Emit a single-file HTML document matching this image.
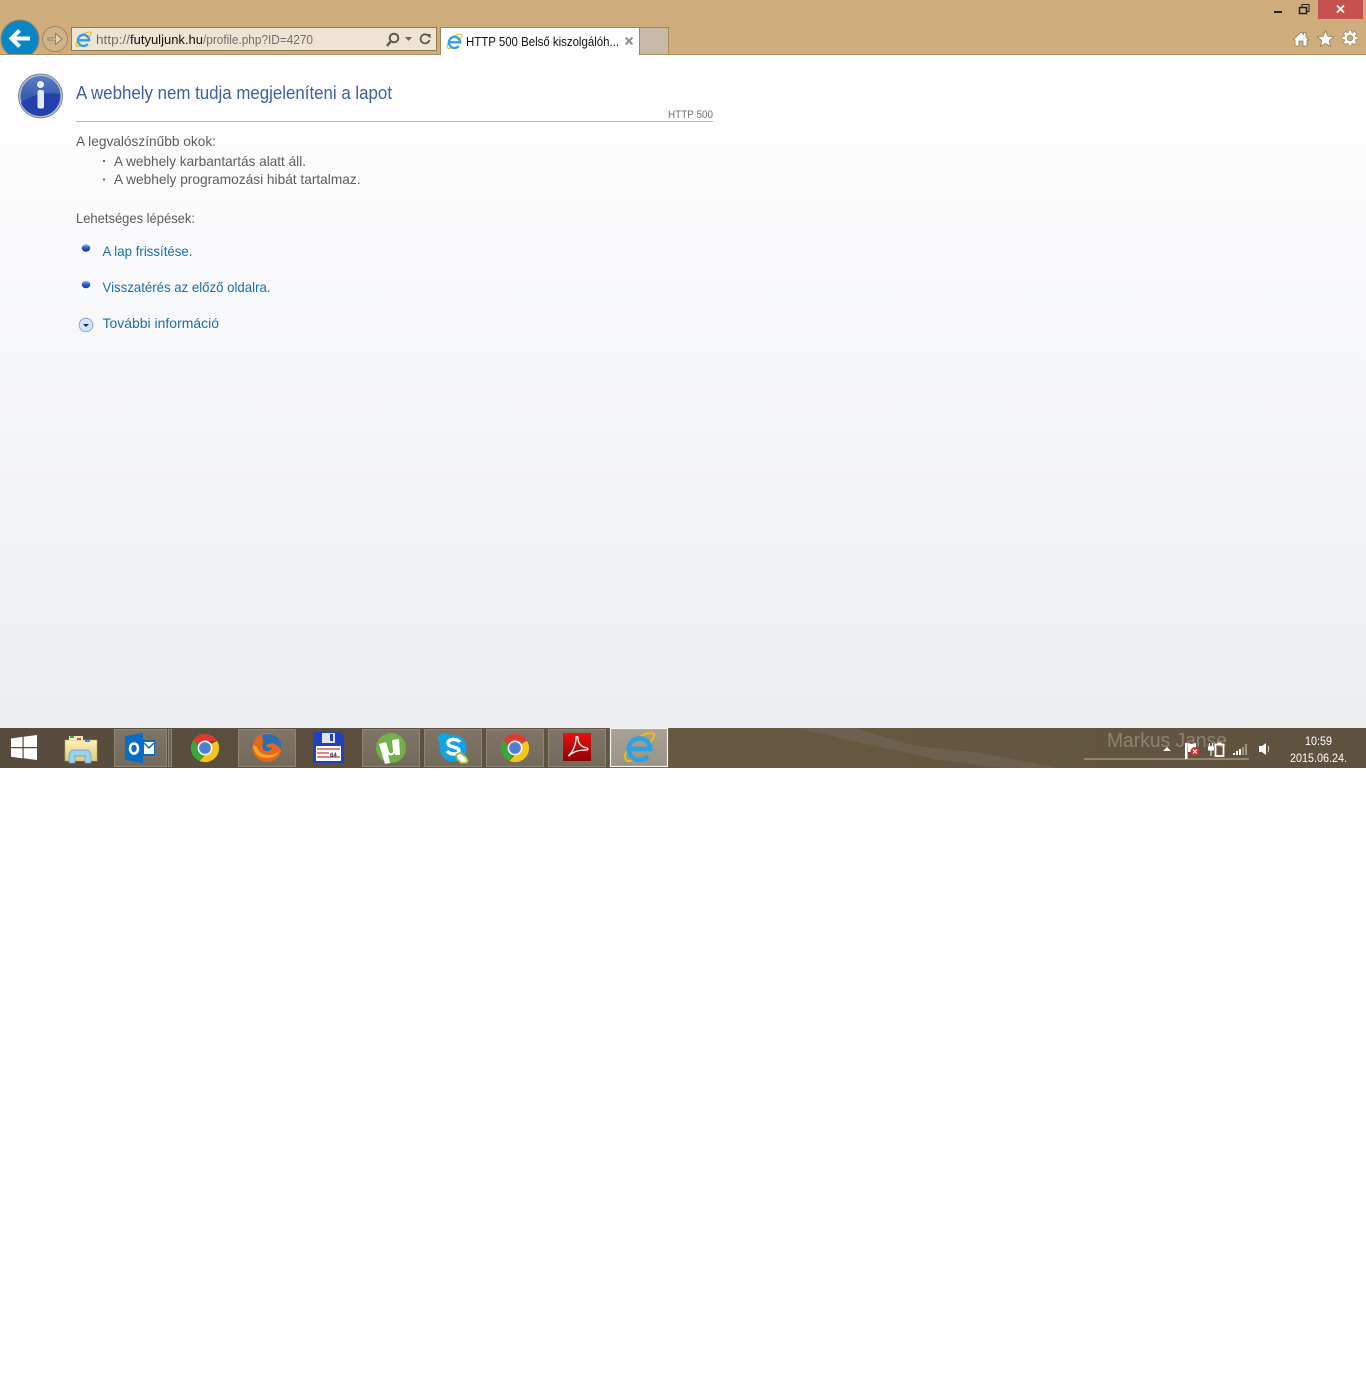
<!DOCTYPE html>
<html lang="hu"><head><meta charset="utf-8"><title>HTTP 500 Belső kiszolgálóhiba</title>
<style>html,body{margin:0;padding:0;background:#fff}svg{display:block}text{font-family:"Liberation Sans",sans-serif}</style></head>
<body>
<svg xmlns="http://www.w3.org/2000/svg" width="1366" height="1375" viewBox="0 0 1366 1375">
<defs>
<clipPath id="backclip"><rect x="0" y="15" width="50" height="39"/></clipPath>
<linearGradient id="pg" x1="0" y1="0" x2="0" y2="1"><stop offset="0" stop-color="#fff"/><stop offset=".12" stop-color="#fdfdfe"/><stop offset="1" stop-color="#eceef2"/></linearGradient>
<linearGradient id="tb" x1="0" y1="0" x2="1" y2="0"><stop offset="0" stop-color="#574c3c"/><stop offset=".3" stop-color="#5c4f3d"/><stop offset=".5" stop-color="#665841"/><stop offset=".75" stop-color="#645640"/><stop offset="1" stop-color="#5e523f"/></linearGradient>
<linearGradient id="btn" x1="0" y1="0" x2="0" y2="1"><stop offset="0" stop-color="#7f7566"/><stop offset="1" stop-color="#736a5c"/></linearGradient>
<linearGradient id="btn2" x1="0" y1="0" x2="0" y2="1"><stop offset="0" stop-color="#a8a397"/><stop offset="1" stop-color="#9a9484"/></linearGradient>
<linearGradient id="gi" x1="0" y1="0" x2="0" y2="1"><stop offset="0" stop-color="#5a7ec6"/><stop offset=".5" stop-color="#3a5fb0"/><stop offset="1" stop-color="#2f4fb8"/></linearGradient>
<linearGradient id="dot" x1="0" y1="0" x2="0" y2="1"><stop offset="0" stop-color="#a9c6ef"/><stop offset=".45" stop-color="#2c5fd0"/><stop offset="1" stop-color="#123a9a"/></linearGradient>
<linearGradient id="folder" x1="0" y1="0" x2="0" y2="1"><stop offset="0" stop-color="#fdf0b8"/><stop offset="1" stop-color="#e5ca7e"/></linearGradient>
<linearGradient id="acro" x1="0" y1="0" x2="0" y2="1"><stop offset="0" stop-color="#e90f0f"/><stop offset="1" stop-color="#8c0505"/></linearGradient>
<symbol id="ie" viewBox="0 0 32 32">
<path d="M3 28C-1 23 9 9 17 5c6-3 12-4 13-2 1 2-1 5-4 8" fill="none" stroke="#f0b71c" stroke-width="2"/>
<path d="M3 28c2 2 6 1 9-1" fill="none" stroke="#f0b71c" stroke-width="2"/>
<path d="M6.500 17.500H26.500A10.500 10.500 0 1 0 24 24.500" fill="none" stroke="#2f9fe6" stroke-width="4.400"/>
</symbol>
<symbol id="chrome" viewBox="0 0 30 30">
<path d="M15 1a14 14 0 0 1 12.100 7H15a7 7 0 0 0-6.700 5L3.400 7A14 14 0 0 1 15 1z" fill="#dd3b32"/>
<path d="M3.400 7L8.300 13a7 7 0 0 0 6 9L9.500 28A14 14 0 0 1 3.400 7z" fill="#3da53c"/>
<path d="M27.100 8A14 14 0 0 1 9.500 28L15 22a7 7 0 0 0 6-11z" fill="#f5c519"/>
<circle cx="15" cy="15" r="7.500" fill="#f2f2f2"/><circle cx="15" cy="15" r="5.800" fill="#4b7fd1"/>
</symbol>
</defs>

<!-- browser chrome -->
<rect width="1366" height="55" fill="#ceac7c"/>
<rect y="54" width="1366" height="1" fill="#a99268"/>
<!-- back / forward -->
<g clip-path="url(#backclip)"><circle cx="20" cy="39" r="19" fill="#0986c5" stroke="#9c8257" stroke-width="1"/></g>
<path d="M11 38.500h19M19.500 30.500l-8 8 8 8" fill="none" stroke="#fff" stroke-width="4"/>
<circle cx="55" cy="39" r="12.500" fill="#d1b388" stroke="#a08a60"/>
<path d="M48 38h7.500v-4.500l6.500 5.500-6.500 5.500V40H48z" fill="#e4d5ba" stroke="#8f7a55" stroke-width=".9"/>
<!-- address -->
<rect x="71.500" y="27.500" width="365" height="23" fill="#efe3d3" stroke="#927b52"/>
<use href="#ie" x="75" y="31" width="17" height="17"/>
<text x="96" y="44" font-size="13" fill="#6e6e6e" textLength="34" lengthAdjust="spacingAndGlyphs">http://</text>
<text x="130" y="44" font-size="13" fill="#111" textLength="73" lengthAdjust="spacingAndGlyphs">futyuljunk.hu</text>
<text x="203" y="44" font-size="13" fill="#6e6e6e" textLength="110" lengthAdjust="spacingAndGlyphs">/profile.php?ID=4270</text>
<circle cx="394" cy="38" r="4.300" fill="none" stroke="#5e5a50" stroke-width="2"/><path d="M391 41l-4 5" stroke="#5e5a50" stroke-width="2.400"/>
<path d="M405 37h7l-3.500 4z" fill="#6b675d"/>
<path d="M429 36.500a4.500 4.500 0 1 0 .5 3.500" fill="none" stroke="#5e5a50" stroke-width="1.800"/><path d="M426 34h4.500v4.500z" fill="#5e5a50"/>
<!-- tabs -->
<rect x="440.500" y="27.500" width="199" height="28" fill="#fff" stroke="#9d875e"/>
<rect x="441" y="54" width="198" height="1" fill="#fff"/>
<rect x="640" y="28" width="28.500" height="26" fill="#c7b9a6"/><path d="M640 27.500h28.500V54" fill="none" stroke="#9d875e"/>
<use href="#ie" x="446" y="33" width="17" height="17"/>
<text x="466" y="46" font-size="13" fill="#111" textLength="153" lengthAdjust="spacingAndGlyphs">HTTP 500 Belső kiszolgálóh...</text>
<path d="M625.500 37.500l7 7M632.500 37.500l-7 7" stroke="#8e8e8e" stroke-width="2"/>
<!-- window controls -->
<rect x="1318" y="0" width="45" height="19" fill="#c75050"/>
<path d="M1337 5.500l7 7M1344 5.500l-7 7" stroke="#fff" stroke-width="1.800"/>
<rect x="1274" y="11" width="8" height="2" fill="#222"/>
<path d="M1302 7.500V4.500h7v7h-2.500" fill="none" stroke="#222"/><rect x="1299.500" y="7.500" width="7" height="6" fill="none" stroke="#222" stroke-width="1.500"/>
<!-- toolbar icons -->
<path d="M1293.500 39.500l7.500-7.500 2.500 2.500v-2h2.500v4.500l3 3h-2v6h-4v-5h-4v5h-4v-6z" fill="#fff" stroke="#8d7a58" stroke-width=".8"/>
<path d="M1325.500 31l2.400 5.300 5.600.6-4.200 3.800 1.200 5.600-5-2.900-5 2.900 1.200-5.600-4.200-3.800 5.600-.6z" fill="#fff" stroke="#8d7a58" stroke-width=".8"/>
<path d="M1350 30v16M1342 38h16M1344.300 32.300l11.400 11.400M1355.700 32.300l-11.400 11.400" stroke="#8d7a58" stroke-width="4"/>
<path d="M1350 30.500v15M1342.500 38h15M1344.700 32.700l10.600 10.600M1355.300 32.700l-10.600 10.600" stroke="#fff" stroke-width="2.800"/>
<circle cx="1350" cy="38" r="5.500" fill="#fff"/>
<circle cx="1350" cy="38" r="2.800" fill="#ceac7c" stroke="#8d7a58" stroke-width=".7"/>

<!-- page -->
<rect y="55" width="1366" height="673" fill="url(#pg)"/>
<circle cx="40.500" cy="96" r="21" fill="url(#gi)" stroke="#b4bac8" stroke-width="2"/>
<circle cx="40.500" cy="96" r="22" fill="none" stroke="#69758f" stroke-width=".7"/>
<path d="M21 103c6-6 22-12 39-9 0 12-8 22-19.500 22C31 116 24 110 21 103z" fill="#2340ac"/>
<circle cx="40.500" cy="84.500" r="3.500" fill="#eef1f7"/><rect x="37.500" y="90" width="6.500" height="18.500" rx="2" fill="#e6eaf2"/>
<text x="76" y="99" font-size="18" fill="#3f5fa3" textLength="316" lengthAdjust="spacingAndGlyphs">A webhely nem tudja megjeleníteni a lapot</text>
<text x="668" y="118" font-size="11" fill="#737373" textLength="45" lengthAdjust="spacingAndGlyphs">HTTP 500</text>
<rect x="76" y="121" width="637" height="1" fill="#b5b9c2"/>
<text x="76" y="146" font-size="14" fill="#5c5c5c" textLength="140" lengthAdjust="spacingAndGlyphs">A legvalószínűbb okok:</text>
<rect x="103" y="160" width="2" height="2" fill="#6a6a6a"/><rect x="103" y="178.500" width="2" height="2" fill="#6a6a6a"/>
<text x="114" y="166" font-size="14" fill="#5c5c5c" textLength="192" lengthAdjust="spacingAndGlyphs">A webhely karbantartás alatt áll.</text>
<text x="114" y="184" font-size="14" fill="#5c5c5c" textLength="246.500" lengthAdjust="spacingAndGlyphs">A webhely programozási hibát tartalmaz.</text>
<text x="76" y="223" font-size="14" fill="#5c5c5c" textLength="119" lengthAdjust="spacingAndGlyphs">Lehetséges lépések:</text>
<ellipse cx="86" cy="248" rx="4.300" ry="3.800" fill="url(#dot)"/>
<text x="102.500" y="256" font-size="14" fill="#1c6ea8" textLength="90" lengthAdjust="spacingAndGlyphs">A lap frissítése.</text>
<ellipse cx="86" cy="284.500" rx="4.300" ry="3.800" fill="url(#dot)"/>
<text x="102.500" y="292" font-size="14" fill="#1c6ea8" textLength="168" lengthAdjust="spacingAndGlyphs">Visszatérés az előző oldalra.</text>
<circle cx="86" cy="325" r="6.800" fill="#d4e3f8" stroke="#8aa6d0"/><path d="M83 324h6l-3 3z" fill="#14265e"/>
<text x="102.500" y="328" font-size="14" fill="#1c6ea8" textLength="116.500" lengthAdjust="spacingAndGlyphs">További információ</text>

<!-- taskbar -->
<rect y="728" width="1366" height="40" fill="url(#tb)"/>
<path d="M795 728h60l60 18 60 6 85 16h-60l-60-8-65-14z" fill="#716351" opacity=".8"/>
<!-- start -->
<path d="M11 738.500l11.500-1.600V747H11zM23.700 736.700L37 735v12H23.700zM11 748.200h11.500v10.200L11 756.800zM23.700 748.200H37V760l-13.300-1.800z" fill="#fff"/>
<!-- explorer -->
<path d="M65 740h32v21H65z" fill="url(#folder)" stroke="#bda468" stroke-width=".6"/>
<rect x="69" y="736" width="14" height="4" fill="#f4e9c0"/><rect x="70" y="736" width="4" height="2" fill="#36a83a"/><rect x="77" y="738" width="4" height="2" fill="#d44"/><rect x="85" y="740" width="5" height="2" fill="#3b8ce0"/>
<path d="M69 763v-9l3-4h16l3 4v9h-6v-7H75v7z" fill="#9bcfee" stroke="#5d9fc8" stroke-width=".7"/>
<!-- outlook -->
<rect x="114.500" y="729.500" width="52" height="37" fill="url(#btn)" stroke="#8e8575"/>
<rect x="168.500" y="729.500" width="3" height="37" fill="#6d6455" stroke="#8e8575"/>
<path d="M143 740h12v16h-12z" fill="#0a6cc4"/>
<path d="M144 742h10v12h-10z" fill="#fff"/><path d="M144 743l5 5 5-5" fill="none" stroke="#0a6cc4" stroke-width="1.500"/>
<path d="M125 736l18-3v30l-18-3z" fill="#0a6cc4"/>
<ellipse cx="134" cy="748.500" rx="4" ry="5" fill="none" stroke="#fff" stroke-width="2.600"/>
<!-- chrome 1 -->
<use href="#chrome" x="190" y="733" width="30" height="30"/>
<!-- firefox -->
<rect x="238.500" y="729.500" width="57" height="37" fill="url(#btn)" stroke="#8e8575"/>
<circle cx="267" cy="747.500" r="14.500" fill="#e5661f"/>
<path d="M262 735c5-2 12-1 16 3 3 3 4 8 3 12-2-4-5-6-9-7-2 1-5 1-6 3 2 2 5 2 6 1 0 3-4 5-7 4-3-2-3-5-2-8 0-3-1-5-1-8z" fill="#2a6fb0"/>
<path d="M253 745c0 8 6 13 14 13 6 0 11-3 13-8-2 3-6 5-11 5-6 0-11-3-12-8z" fill="#f5a623"/>
<!-- floppy -->
<path d="M313 732h27l4 4v27h-31z" fill="#1f43c0"/>
<rect x="322" y="733" width="13" height="10" fill="#e4e4e4"/><rect x="330" y="734" width="3" height="7" fill="#1f43c0"/>
<rect x="316" y="746" width="25" height="15" fill="#fff"/>
<path d="M317 749h23M317 753h12M317 757h23" stroke="#c93a3a" stroke-width="1.200"/>
<text x="330" y="757" font-size="6" fill="#333" font-weight="bold">64</text>
<!-- utorrent -->
<rect x="362.500" y="729.500" width="57" height="37" fill="url(#btn)" stroke="#8e8575"/>
<circle cx="391" cy="748" r="15" fill="#72b04a"/>
<path d="M379 744l7-2 3 10c1 2 4 2 4-1l-1-11 7-1 1 16h-5v-2c-2 3-6 3-7 1l2 9-5 1z" fill="#fff"/>
<!-- skype -->
<rect x="424.500" y="729.500" width="57" height="37" fill="url(#btn)" stroke="#8e8575"/>
<circle cx="453" cy="748" r="13.500" fill="#11a5e5"/><circle cx="444" cy="739" r="6" fill="#11a5e5"/>
<path d="M460 742c-2-3-12-4-12 1 0 5 11 3 11 8 0 4-9 4-12 0" fill="none" stroke="#fff" stroke-width="3.400"/>
<path d="M456 756c0-2 3-3 5-3l5 4 2 4-2 2h-5l-4-4z" fill="#fff" stroke="#8dbb2e" stroke-width="1.800"/>
<!-- chrome 2 -->
<rect x="486.500" y="729.500" width="57" height="37" fill="url(#btn)" stroke="#8e8575"/>
<use href="#chrome" x="500" y="733" width="30" height="30"/>
<!-- acrobat -->
<rect x="548.500" y="729.500" width="57" height="37" fill="url(#btn)" stroke="#8e8575"/>
<rect x="563" y="733" width="28" height="28" fill="url(#acro)"/>
<path d="M569 755c4-3 7-11 7-17 0-2 2-2 2 0 0 6 4 9 9 10 2 1 1 2-1 2-6 0-12 1-16 5-1 1-2 1-1 0z" fill="none" stroke="#fff" stroke-width="1.300"/>
<!-- IE -->
<rect x="610.500" y="728.500" width="57" height="38" fill="url(#btn2)" stroke="#f4f3ef" stroke-width="1.200"/>
<use href="#ie" x="623" y="731" width="33" height="33"/>
<!-- tray -->
<text x="1107" y="747" font-size="20" fill="#8d8371" textLength="120" lengthAdjust="spacingAndGlyphs">Markus Janse</text>
<rect x="1084" y="758" width="165" height="2" fill="#8f8672"/>
<path d="M1163 751l4-4 4 4z" fill="#fff"/>
<path d="M1185 743h2.500v16H1185zM1188 743l4 1 4-1v9h-8z" fill="#fff"/>
<circle cx="1195" cy="751.500" r="4.500" fill="#d92b2b"/><path d="M1193 749.500l4 4M1197 749.500l-4 4" stroke="#fff" stroke-width="1.200"/>
<rect x="1215.500" y="744.500" width="8" height="11.500" fill="none" stroke="#fff" stroke-width="1.800"/><rect x="1217.500" y="742.500" width="4" height="1.500" fill="#fff"/>
<path d="M1209.500 743v4M1212.500 743v4M1208.500 747h5v3h-5zM1211 750v6" stroke="#fff" fill="#fff"/>
<path d="M1233 753h2v2h-2zM1236 751h2v4h-2zM1239 749h2v6h-2z" fill="#fff"/><path d="M1242 747h2v8h-2zM1245 744h2v11h-2z" fill="#9d9585"/>
<path d="M1259 746h3l4-3v12l-4-3h-3z" fill="#fff"/><path d="M1268 746c1 2 1 4 0 6" fill="none" stroke="#d8d3c8"/>
<text x="1305" y="745" font-size="12" fill="#fff" textLength="27" lengthAdjust="spacingAndGlyphs">10:59</text>
<text x="1290" y="762" font-size="12" fill="#fff" textLength="57" lengthAdjust="spacingAndGlyphs">2015.06.24.</text>
</svg>
</body></html>
